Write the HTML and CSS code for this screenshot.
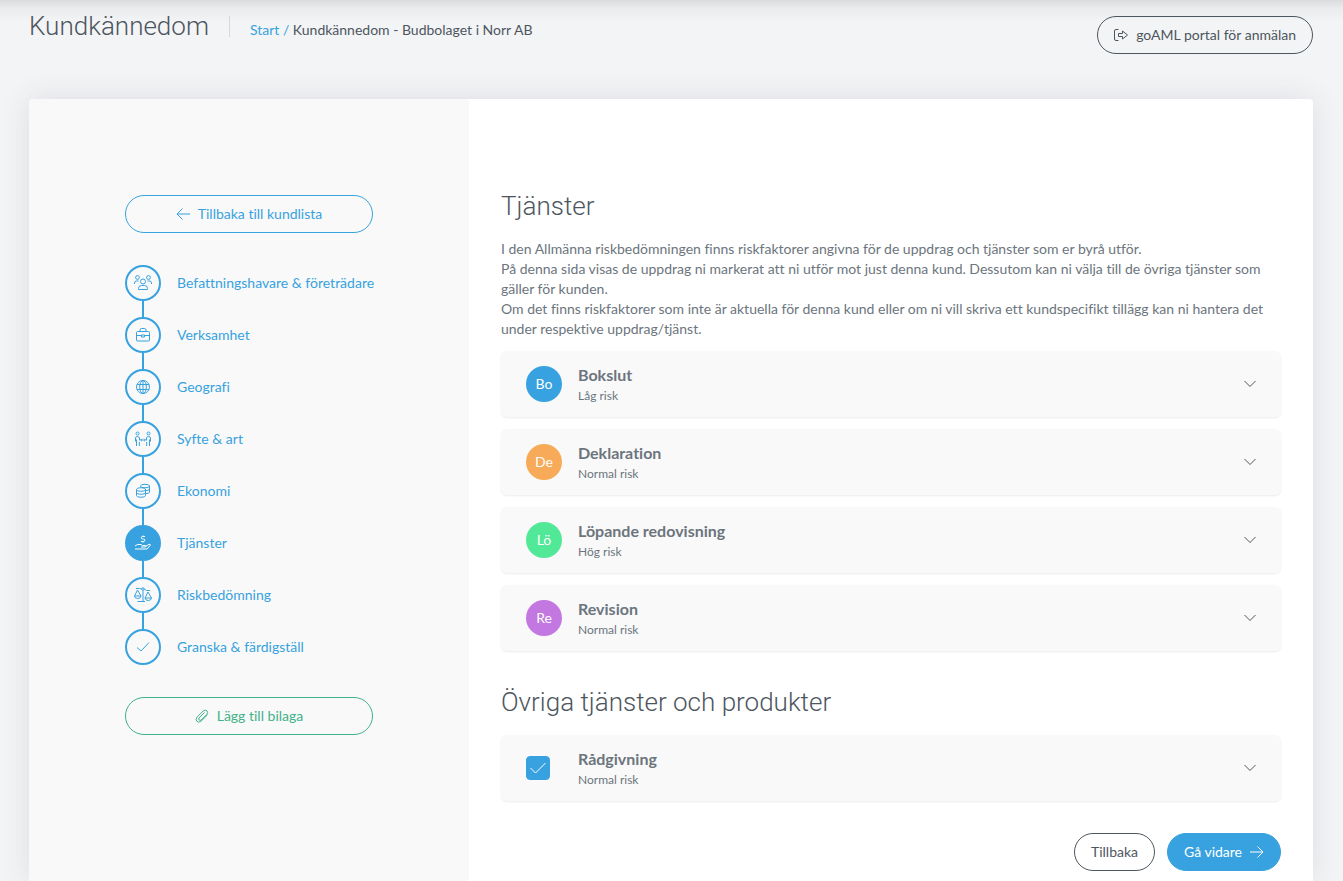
FILE: index.html
```html
<!DOCTYPE html>
<html lang="sv">
<head>
  <meta charset="UTF-8">
  <meta name="viewport" content="width=device-width, initial-scale=1.0">
  <title>Kundkännedom - Budbolaget i Norr AB</title>
  <link rel="stylesheet" href="styles.css">
</head>
<body>
  <header class="page-header">
    <h1>Kundkännedom</h1>
    <nav class="breadcrumb">
      <a href="#">Start /</a>
      <span>Kundkännedom - Budbolaget i Norr AB</span>
    </nav>
    <button class="btn btn-dark" type="button">
      <svg width="14" height="14" viewBox="1 0 14 14"><path d="M5.500 1.500H3Q1.500 1.500 1.500 3v8Q1.500 12.500 3 12.500h2.500M5.500 5.500h4v-2.500l5 4-5 4V8.500h-4z"/></svg>
      goAML portal för anmälan
    </button>
  </header>

  <main class="card">
    <aside class="sidebar">
      <a class="btn btn-blue" href="#">
        <svg width="14" height="14" viewBox="0 0 14 14"><path d="M14 7H1M6.500 1.500 1 7l5.500 5.500"/></svg>
        Tillbaka till kundlista
      </a>

      <ul class="steps">
        <li><a href="#">
          <span class="step-icon"><svg width="20" height="20" viewBox="0 0 20 20"><circle cx="10" cy="8.500" r="2.500"/><path d="M5.500 16.500v-1q0-3 3-3h3q3 0 3 3v1z"/><circle cx="4.500" cy="4.500" r="1.900"/><circle cx="15.500" cy="4.500" r="1.900"/><path d="M1.500 11v-1q0-2 2-2h2M18.500 11v-1q0-2-2-2h-2"/></svg></span>
          Befattningshavare &amp; företrädare</a></li>
        <li><a href="#">
          <span class="step-icon"><svg width="20" height="20" viewBox="0 0 20 20"><rect x="3.500" y="6.500" width="13" height="9.500" rx="1"/><path d="M7 6.500v-1.500q0-1.500 1.500-1.500h3q1.500 0 1.500 1.500v1.500M3.500 10.500h5M11.500 10.500h5M8.500 10h3v2h-3z"/></svg></span>
          Verksamhet</a></li>
        <li><a href="#">
          <span class="step-icon"><svg width="20" height="20" viewBox="0 0 20 20"><circle cx="10" cy="10" r="6.500"/><ellipse cx="10" cy="10" rx="3.300" ry="6.500"/><path d="M10 3.500v13M4 7.500h12M4 12.500h12"/></svg></span>
          Geografi</a></li>
        <li><a href="#">
          <span class="step-icon"><svg width="20" height="20" viewBox="0 0 20 20"><circle cx="4.500" cy="4.500" r="1.500"/><circle cx="15.500" cy="4.500" r="1.500"/><path d="M2.500 12.500V9q0-1.500 2-1.500 1.500 0 2 1.500v2.500M17.500 12.500V9q0-1.500-2-1.500-1.500 0-2 1.500v2.500M3.500 10.500v6.500M6.300 13v4M13.700 13v4M16.500 10.500v6.500M7.500 11h5M8.800 9.800 7.600 11l1.200 1.200M11.200 9.800l1.200 1.200-1.200 1.200"/></svg></span>
          Syfte &amp; art</a></li>
        <li><a href="#">
          <span class="step-icon"><svg width="20" height="20" viewBox="0 0 20 20"><ellipse cx="8" cy="8.500" rx="4.500" ry="1.800"/><path d="M3.500 8.500v6q0 1.800 4.500 1.800t4.500-1.800v-6M3.500 11.500q0 1.800 4.500 1.800t4.500-1.800M7.500 5.500V5q0-1.700 4.500-1.700T16.500 5v6q0 1.500-4 1.700M7.500 5.500q.5 1.300 4.500 1.300T16.500 5M12.500 9.700q4-.2 4-1.700"/></svg></span>
          Ekonomi</a></li>
        <li class="active"><a href="#">
          <span class="step-icon"><svg width="20" height="20" viewBox="0 0 20 20"><path d="M12 3.500h-2.500q-1.200 0-1.200 1.200T9.500 6h1.200q1.200 0 1.200 1.200T10.700 8.500H8M10 2.500v1M10 8.500v1M2 13l2.500-1.500h3.500l1.500 1h3q1 1.500-.5 1.500H8M12.500 13.500l3.500-2.200q1.800-.3 1.300 1l-3.300 3.700H2"/></svg></span>
          Tjänster</a></li>
        <li><a href="#">
          <span class="step-icon"><svg width="20" height="20" viewBox="0 0 20 20"><circle cx="10" cy="4" r="1.200"/><path d="M10 5.500v11M4.500 16.500h7.500M3 3.500h3.500L8.800 4M11.200 4l2.300 1.500H17M4.500 5 1.500 11h6.500zM1.500 11q.3 2.500 3.200 2.500T8 11M15 7l-3 6h6.500zM12 13q.3 2.500 3.200 2.500t3.300-2.500"/></svg></span>
          Riskbedömning</a></li>
        <li><a href="#">
          <span class="step-icon"><svg width="20" height="20" viewBox="0 0 20 20"><path d="M4 10.500 8 14l8-8.500"/></svg></span>
          Granska &amp; färdigställ</a></li>
      </ul>

      <button class="btn btn-green" type="button">
        <svg width="14" height="14" viewBox="0 0 14 14"><path d="M9.500 3.500 4 9q-.8 1.200.2 2t2 0L11.800 5.400q1.600-2 .2-3.600-1.800-1.500-3.700.1L2 8.200q-1.800 2.200-.2 4t4 .2l6.700-6.600"/></svg>
        Lägg till bilaga
      </button>
    </aside>

    <section class="content">
      <h2>Tjänster</h2>
      <p class="intro">
        I den Allmänna riskbedömningen finns riskfaktorer angivna för de uppdrag och tjänster som er byrå utför.<br>
        På denna sida visas de uppdrag ni markerat att ni utför mot just denna kund. Dessutom kan ni välja till de övriga tjänster som gäller för kunden.<br>
        Om det finns riskfaktorer som inte är aktuella för denna kund eller om ni vill skriva ett kundspecifikt tillägg kan ni hantera det under respektive uppdrag/tjänst.
      </p>

      <div class="service-list">
        <div class="service">
          <span class="avatar blue">Bo</span>
          <div class="service-text">
            <h3>Bokslut</h3>
            <p>Låg risk</p>
          </div>
          <button class="toggle" type="button" aria-label="Visa Bokslut"><svg width="12" height="8" viewBox="0 0 12 8"><path d="M.5 1 6 6.500 11.500 1"/></svg></button>
        </div>
        <div class="service">
          <span class="avatar orange">De</span>
          <div class="service-text">
            <h3>Deklaration</h3>
            <p>Normal risk</p>
          </div>
          <button class="toggle" type="button" aria-label="Visa Deklaration"><svg width="12" height="8" viewBox="0 0 12 8"><path d="M.5 1 6 6.500 11.500 1"/></svg></button>
        </div>
        <div class="service">
          <span class="avatar green">Lö</span>
          <div class="service-text">
            <h3>Löpande redovisning</h3>
            <p>Hög risk</p>
          </div>
          <button class="toggle" type="button" aria-label="Visa Löpande redovisning"><svg width="12" height="8" viewBox="0 0 12 8"><path d="M.5 1 6 6.500 11.500 1"/></svg></button>
        </div>
        <div class="service">
          <span class="avatar purple">Re</span>
          <div class="service-text">
            <h3>Revision</h3>
            <p>Normal risk</p>
          </div>
          <button class="toggle" type="button" aria-label="Visa Revision"><svg width="12" height="8" viewBox="0 0 12 8"><path d="M.5 1 6 6.500 11.500 1"/></svg></button>
        </div>
      </div>

      <h2>Övriga tjänster och produkter</h2>
      <div class="service-list">
        <div class="service">
          <span class="check">
            <input type="checkbox" id="radgivning" checked>
            <svg width="18" height="14" viewBox="0 0 18 14"><path d="M1.500 7 6.500 12 16.500 2"/></svg>
          </span>
          <div class="service-text">
            <h3><label for="radgivning">Rådgivning</label></h3>
            <p>Normal risk</p>
          </div>
          <button class="toggle" type="button" aria-label="Visa Rådgivning"><svg width="12" height="8" viewBox="0 0 12 8"><path d="M.5 1 6 6.500 11.500 1"/></svg></button>
        </div>
      </div>

      <div class="actions">
        <button class="btn btn-dark" type="button">Tillbaka</button>
        <button class="btn btn-primary" type="button">
          Gå vidare
          <svg width="14" height="14" viewBox="0 0 14 14"><path d="M0 7h13M7.500 1.500 13 7l-5.500 5.500"/></svg>
        </button>
      </div>
    </section>
  </main>
</body>
</html>
```

FILE: styles.css
```css
* {
  box-sizing: border-box;
}

body {
  margin: 0;
  min-height: 100vh;
  padding: 0 30px 0 29px;
  display: flex;
  flex-direction: column;
  font-family: Lato, "Liberation Sans", sans-serif;
  font-size: 14px;
  line-height: 20px;
  font-variant-ligatures: none;
  color: #6c757d;
  background: linear-gradient(#d9dbdd, #eaebed 8px, #f3f4f6 22px) no-repeat #f3f4f6;
}

h1, h2, h3, p, ul {
  margin: 0;
  padding: 0;
}

a {
  color: #37a2df;
  text-decoration: none;
}

svg {
  fill: none;
  stroke: currentColor;
  stroke-width: 1;
  flex-shrink: 0;
}

/* Header */
.page-header {
  display: flex;
  align-items: flex-start;
  height: 99px;
  padding-top: 16px;
}

h1, h2 {
  font-family: Roboto, "Liberation Sans", sans-serif;
  font-size: 26px;
  font-weight: 300;
  color: #4d565e;
}

h1 {
  line-height: 21px;
  padding-right: 20px;
  border-right: 1px solid #d5d8dc;
}

.breadcrumb {
  padding: 4px 0 0 20px;
  color: #4d565e;
}

.page-header .btn {
  margin-left: auto;
}

/* Buttons */
.btn {
  display: flex;
  align-items: center;
  justify-content: center;
  gap: 8px;
  height: 38px;
  padding: 0 16px;
  border: 1px solid;
  border-radius: 19px;
  background: transparent;
  font: inherit;
  cursor: pointer;
}

.btn-dark {
  color: #4d565e;
}

.btn-blue {
  color: #37a2df;
}

.btn-green {
  color: #41b28a;
}

.btn-primary {
  color: #fff;
  background-color: #37a2df;
  border-color: #37a2df;
}

/* Card */
.card {
  display: flex;
  flex: 1;
  background-color: #fff;
  border-radius: 4px 4px 0 0;
  box-shadow: 0 0 30px rgba(60, 65, 75, 0.12);
}

.sidebar {
  flex: 0 0 440px;
  min-width: 0;
  display: flex;
  flex-direction: column;
  gap: 32px;
  padding: 96px;
  background-color: #f9f9f9;
  border-radius: 4px 0 0 0;
}

.steps {
  display: flex;
  flex-direction: column;
  gap: 16px;
  list-style: none;
}

.steps a {
  display: flex;
  align-items: center;
  gap: 16px;
  white-space: nowrap;
}

.step-icon {
  position: relative;
  display: flex;
  flex-shrink: 0;
  align-items: center;
  justify-content: center;
  width: 36px;
  height: 36px;
  border: 2px solid #37a2df;
  border-radius: 50%;
}

.steps li:not(:last-child) .step-icon::after {
  content: "";
  position: absolute;
  top: 34px;
  left: 15px;
  width: 2px;
  height: 16px;
  background-color: #37a2df;
}

.active .step-icon {
  color: #fff;
  background-color: #37a2df;
}

/* Content */
.content {
  flex: 1;
  min-width: 0;
  padding: 91px 32px 10px;
}

h2 {
  line-height: 32px;
}

.intro {
  margin: 17px 0 12px;
}

.service-list {
  display: flex;
  flex-direction: column;
  gap: 12px;
}

.service-list + h2 {
  margin: 35px 0 17px;
}

.service {
  display: flex;
  align-items: center;
  height: 66px;
  padding: 0 25px;
  background-color: #f9f9f9;
  border-radius: 6px;
  box-shadow: 0 1px 2px rgba(0, 0, 0, 0.08);
}

.avatar {
  width: 36px;
  height: 36px;
  border-radius: 50%;
  line-height: 36px;
  text-align: center;
  color: #fff;
}

.blue {
  background-color: #37a2df;
}

.orange {
  background-color: #f7ab59;
}

.green {
  background-color: #51e898;
}

.purple {
  background-color: #c377e0;
}

.service-text {
  flex: 1;
  padding: 3px 0 0 16px;
}

.service-text h3 {
  margin-bottom: 1px;
  font-size: 16px;
  font-weight: 700;
}

.service-text p {
  font-size: 12px;
}

.toggle {
  display: flex;
  padding: 0;
  border: 0;
  background: none;
  color: #4d565e;
  cursor: pointer;
}

.check {
  position: relative;
  width: 36px;
  height: 24px;
}

.check input {
  appearance: none;
  width: 24px;
  height: 24px;
  margin: 0;
  border: 1px solid #37a2df;
  border-radius: 4px;
}

.check input:checked {
  background-color: #37a2df;
}

.check svg {
  position: absolute;
  top: 5px;
  left: 3px;
  color: #fff;
  pointer-events: none;
}

.actions {
  display: flex;
  justify-content: flex-end;
  gap: 12px;
  margin-top: 32px;
}
```
